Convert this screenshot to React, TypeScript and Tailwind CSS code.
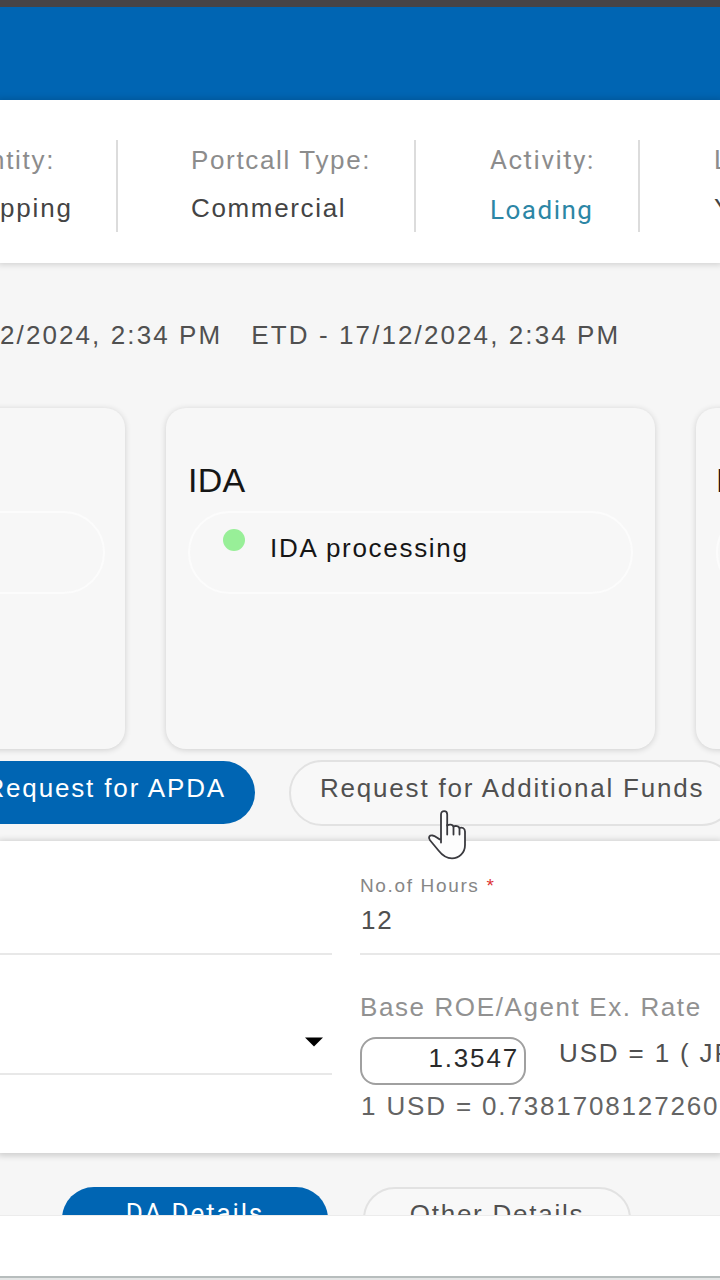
import type { ReactNode } from "react";
import clsx from "clsx";

const HeaderCell = ({ label, value, className, labelClass, valueClass }: {
    label: string;
    value: string;
    className?: string;
    labelClass?: string;
    valueClass?: string;
}) => (
    <div className={clsx("flex h-[92px] shrink-0 flex-col border-[#dcdcdc]", className)}>
        <span className={clsx("mt-[5px] text-[#8c8c8c]", labelClass)}>{label}</span>
        <span className={clsx("mt-[18px]", valueClass ?? "text-[#444]")}>{value}</span>
    </div>
);

const StageCard = ({ className, children }: { className?: string; children?: ReactNode }) => (
    <div
        className={clsx(
            "h-[341px] shrink-0 rounded-[20px] bg-[#f7f7f7] shadow-[0_1px_6px_rgba(0,0,0,0.16)]",
            className,
        )}
    >
        {children}
    </div>
);

const StatusPill = ({ children }: { children?: ReactNode }) => (
    <div className="flex h-[83px] rounded-full border-2 border-[#fcfcfc] px-[33px]">{children}</div>
);

const HandCursor = () => (
    <svg className="absolute left-[427px] top-[809px]" width="42" height="52" viewBox="0 0 42 52">
        <path
            d="M14 33.5V5.5C14 1 20.200 1 20.200 5.500V16.500C22.500 15 25.500 15.500 26.500 17.500C28.500 16.500 31.500 17 32.500 19C34.500 18 38 19 38 22.500V36C38 44 32 49.300 25 49.300C19 49.300 15 46 11.500 41.500L3 31.200C.8 28 2.500 26.200 5.500 26.500C8.500 26.800 10.500 29.500 14 31"
            fill="#fdfdfd"
            stroke="#3a3a3f"
            strokeWidth="1.800"
            strokeLinejoin="round"
            strokeLinecap="round"
        />
        <path d="M20.200 16V25.500M26.500 17.500V25.500M32.500 19V25.500" stroke="#3a3a3f" strokeWidth="1.800" strokeLinecap="round" />
    </svg>
);

export default function App() {
    return (
        <div className="relative flex h-[1280px] w-[720px] flex-col overflow-hidden whitespace-nowrap bg-[#f6f6f6] font-['Liberation_Sans',Arial,sans-serif] text-[26px] leading-[30px] tracking-[1.85px]">
            <div className="h-[7px] shrink-0 bg-[#474447]" />
            <div className="h-[93px] shrink-0 bg-[#0065b3]" />

            <header className="flex h-[163px] shrink-0 bg-white pt-10 shadow-[0_0_6px_2px_rgba(0,0,0,0.14)]">
                <HeaderCell label="ntity:" value="pping" className="w-[118px] border-r-2" labelClass="-ml-[10px] tracking-[1.7px]" />
                <HeaderCell
                    label="Portcall Type:"
                    value="Commercial"
                    className="w-[298px] border-r-2 pl-[73px] tracking-[1.65px]"
                />
                <HeaderCell
                    label="Activity:"
                    value="Loading"
                    className="w-[224px] border-r-2 pl-[74px] tracking-[1.5px]"
                    labelClass="font-[Roboto]"
                    valueClass="font-[Roboto] pt-[2px] text-[#2c86a5]"
                />
                <HeaderCell label="L" value="Y" className="pl-[74px]" labelClass="font-[Roboto]" />
            </header>

            <div className="flex h-[145px] shrink-0 gap-[29px] pt-[57px] tracking-[2.1px] text-[#505050]">
                <span>2/2024, 2:34 PM</span>
                <span>ETD - 17/12/2024, 2:34 PM</span>
            </div>

            <section className="flex h-[341px] shrink-0 gap-[41px]">
                <StageCard className="-ml-[364px] w-[489px] pl-[22px] pr-[20px] pt-[103px]">
                    <StatusPill />
                </StageCard>
                <StageCard className="w-[489px] px-[22px] pt-[53px]">
                    <h2 className="h-[50px] text-[34px] leading-[38px] tracking-[0.3px] text-[#161616]">IDA</h2>
                    <StatusPill>
                        <span className="mt-[16px] size-[22px] rounded-full bg-[#98ef98]" />
                        <span className="ml-[25px] mt-[20px] tracking-[1.7px] text-[#161616]">IDA processing</span>
                    </StatusPill>
                </StageCard>
                <StageCard className="w-[489px] px-[20px] pt-[53px]">
                    <h2 className="h-[50px] text-[34px] leading-[38px] text-[#161616]">F</h2>
                    <StatusPill />
                </StageCard>
            </section>

            <div className="flex h-[92px] shrink-0 gap-[34px] pt-[12px]">
                <button className="-ml-[30px] flex h-[63px] w-[285px] shrink-0 justify-end rounded-full bg-[#0065b3] pr-[29px] pt-[12px] text-white">
                    Request for APDA
                </button>
                <button className="-mt-px flex h-[66px] w-[446px] shrink-0 rounded-full border-2 border-[#e2e2e2] bg-[#f8f8f8] pl-[29px] pt-[11px] tracking-[1.8px] text-[#505050]">
                    Request for Additional Funds
                </button>
            </div>

            <section className="flex h-[312px] shrink-0 gap-7 bg-white shadow-[0_1px_6px_2px_rgba(0,0,0,0.16)]">
                <div className="w-[332px] shrink-0">
                    <div className="h-[114px] border-b-2 border-[#e8e8e8]" />
                    <div className="flex h-[120px] justify-end border-b-2 border-[#e8e8e8] pr-[9px] pt-[82px]">
                        <svg width="18" height="10" viewBox="0 0 18 10">
                            <path d="M0 .5H18L9 9.500Z" fill="#000" />
                        </svg>
                    </div>
                </div>
                <div className="w-[400px] shrink-0">
                    <div className="flex h-[114px] flex-col border-b-2 border-[#e8e8e8] pt-[34px]">
                        <label className="text-[19px] leading-[22px] tracking-[1.65px] text-[#868686]">
                            No.of Hours <span className="text-[#d33]">*</span>
                        </label>
                        <span className="ml-px mt-[8px] text-[#505050]">12</span>
                    </div>
                    <div className="pt-[37px] tracking-[1.6px] text-[#919191]">Base ROE/Agent Ex. Rate</div>
                    <div className="mt-[15px] flex h-[48px]">
                        <div className="h-[48px] w-[166px] shrink-0 rounded-2xl border-2 border-[#a0a0a0] pr-[5px] pt-[4px] text-right text-[#2a2a2a]">
                            1.3547
                        </div>
                        <span className="ml-[33px] mt-px text-[#505050]">USD = 1 ( JPY )</span>
                    </div>
                    <div className="ml-px mt-[6px] text-[#646464]">1 USD = 0.73817081272606</div>
                </div>
            </section>

            <div className="flex h-[62px] shrink-0 gap-[35px] overflow-hidden pl-[62px] pt-[34px]">
                <button className="flex h-[64px] w-[266px] shrink-0 justify-center rounded-full bg-[#0065b3] pt-[11px] font-[Roboto] text-white">
                    DA Details
                </button>
                <button className="flex h-[64px] w-[268px] shrink-0 justify-center rounded-full border-2 border-[#e2e2e2] bg-[#f8f8f8] pt-[10px] tracking-[1.75px] text-[#505050]">
                    Other Details
                </button>
            </div>

            <footer className="h-[63px] shrink-0 border-b-2 border-t border-b-[#b7bdbd] border-t-[#ececec] bg-white" />
            <div className="h-[2px] shrink-0 bg-[#e4e6e6]" />

            <HandCursor />
        </div>
    );
}
